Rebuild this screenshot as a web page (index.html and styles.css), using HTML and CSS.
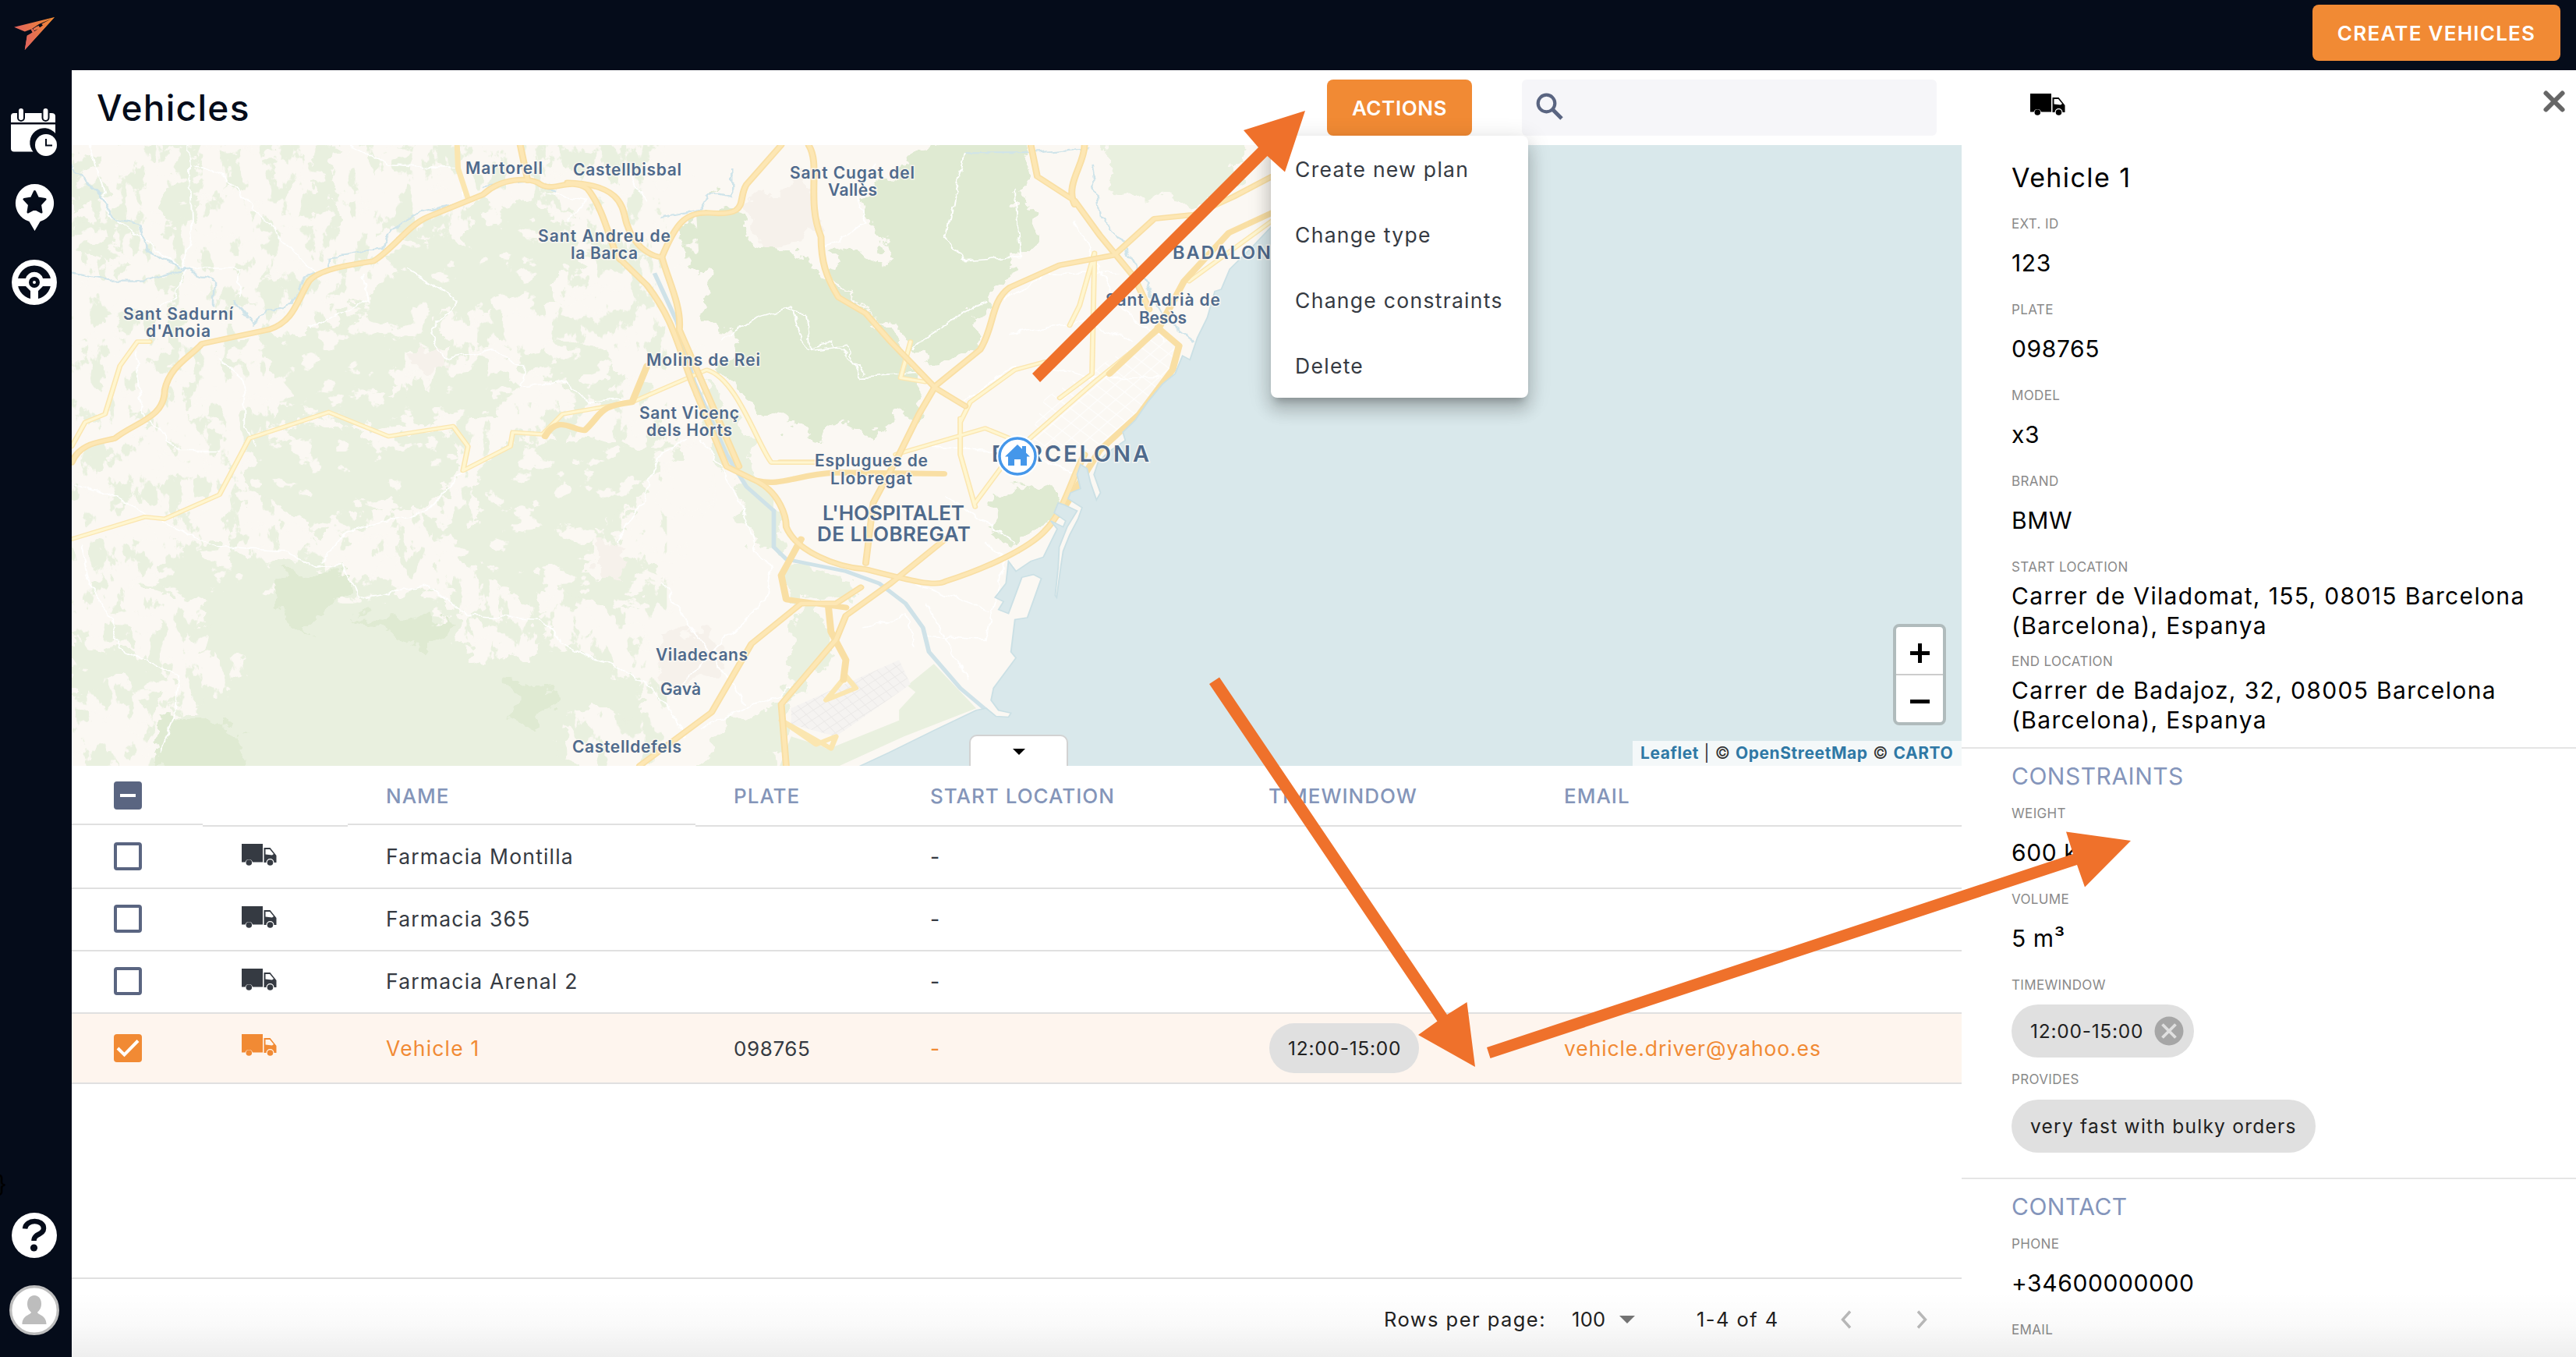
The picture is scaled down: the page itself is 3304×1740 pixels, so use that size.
FILE: index.html
```html
<!DOCTYPE html>
<html lang="en">
<head>
<meta charset="utf-8">
<title>Vehicles</title>
<link rel="stylesheet" href="styles.css">
</head>
<body>
<svg class="defs" width="0" height="0">
  <symbol id="truck" viewBox="0 0 45 28">
    <path d="M0 0H27V23.500H14A5 5 0 0 0 4.500 23.500H0Z"/>
    <path fill-rule="evenodd" d="M28.500 5H36.500L44.500 15V24H41.500A5 5 0 0 0 31.500 24H28.500ZM30.500 7V13.500L39 14.500L41 13L36 7Z"/>
    <circle cx="9.300" cy="24" r="3.800"/><circle cx="36.500" cy="24" r="3.800"/>
  </symbol>
</svg>
<div class="app">
  <header class="topbar">
    <svg class="logo" viewBox="0 0 54 44">
      <defs><linearGradient id="lg" x1="0" y1="0" x2="1" y2="0"><stop offset="0" stop-color="#e0635f"/><stop offset="1" stop-color="#f28b30"/></linearGradient></defs>
      <path fill="url(#lg)" d="M53 0L0 13L14 19L23 15.500L33 9L48 2.500L36 12L25 20L17 24L14 43Z"/>
      <path fill="url(#lg)" d="M25 15L30 12L32 15L26 18Z"/>
      <path fill="url(#lg)" d="M53 0L14 43L17 25L24 20L22 16L24 15L27 19L31 16L29 13L32 11L34 14L38 11L36 9L48 2.500Z"/>
    </svg>
    <button class="btn btn-create">CREATE VEHICLES</button>
  </header>
  <nav class="sidebar">
    <svg class="nav-cal" viewBox="0 0 60 61">
      <path fill="#fff" d="M0 10Q0 6 4 6H52Q57 6 57 10V18H0ZM0 20.500H57V32A17 17 0 0 0 28.500 55.500H4Q0 55.500 0 51.500Z"/>
      <g fill="#fff" stroke="#050c1a" stroke-width="2"><rect x="9" y="-1" width="8" height="17" rx="4"/><rect x="40.500" y="-1" width="8" height="17" rx="4"/></g>
      <circle cx="45" cy="47" r="14" fill="#fff"/><path d="M45 39V47.500H53" fill="none" stroke="#050c1a" stroke-width="2"/>
    </svg>
    <svg class="nav-pin" viewBox="0 0 49 60">
      <path fill="#fff" d="M24.500 0A24.500 24.500 0 0 1 31.500 48L24.500 60L17.500 48A24.500 24.500 0 0 1 24.500 0Z"/>
      <path fill="#050c1a" stroke="#050c1a" stroke-width="3" stroke-linejoin="round" d="M24.500 9.500L28.500 18L38 19.500L31.500 26.500L33 36L24.500 31.500L16 36L17.500 26.500L11 19.500L20.500 18Z"/>
    </svg>
    <svg class="nav-wheel" viewBox="0 0 58 58">
      <circle cx="29" cy="29" r="25.200" fill="none" stroke="#fff" stroke-width="7.500"/>
      <path fill="#fff" d="M5 24H18A11.500 11.500 0 0 1 40 24H53V34H40L34 40V53H24V40L18 34H5Z"/>
      <circle cx="29" cy="29" r="4.500" fill="#fff" stroke="#050c1a" stroke-width="5"/>
    </svg>
    <span class="brace">}</span>
    <svg class="nav-help" viewBox="0 0 58 58">
      <circle cx="29" cy="29" r="29" fill="#fff"/>
      <path d="M17 20.500C18 8 41 8 41 20C41 29 28.500 26 28.500 36" fill="none" stroke="#050c1a" stroke-width="6.500"/><circle cx="28.500" cy="45" r="4.600" fill="#050c1a"/>
    </svg>
    <svg class="nav-user" viewBox="0 0 64 64">
      <circle cx="32" cy="32" r="30.300" fill="#fff" stroke="#bdbdbd" stroke-width="3.400"/>
      <path fill="#bdbdbd" d="M32 13C38 13 41 18 41 24C41 29 38.500 32.500 36 34.500C36 38 47.500 38 47.500 50H16.500C16.500 38 28 38 28 34.500C25.500 32.500 23 29 23 24C23 18 26 13 32 13Z"/>
    </svg>
  </nav>

  <main class="main">
    <div class="page-head">
      <h1>Vehicles</h1>
      <div class="actions">
        <button class="btn btn-actions">ACTIONS</button>
        <ul class="menu">
          <li>Create new plan</li><li>Change type</li><li>Change constraints</li><li>Delete</li>
        </ul>
      </div>
      <div class="search">
        <svg viewBox="0 0 36 36"><circle cx="13.500" cy="13.500" r="10.800" fill="none" stroke="#5a6581" stroke-width="4.200"/><path d="M21.500 21.500L33 33" stroke="#5a6581" stroke-width="5"/></svg>
      </div>
    </div>

    <section class="map">
      <svg class="tiles" viewBox="3 12 3801 1541" preserveAspectRatio="none">
        <defs>
          <filter id="rag" x="-5%" y="-5%" width="110%" height="110%"><feTurbulence type="fractalNoise" baseFrequency="0.022" numOctaves="4" seed="4"/><feDisplacementMap in="SourceGraphic" scale="75" xChannelSelector="R" yChannelSelector="G"/></filter>
          <filter id="patch" color-interpolation-filters="sRGB" x="0" y="0" width="100%" height="100%"><feTurbulence type="fractalNoise" baseFrequency="0.018" numOctaves="5" seed="11" result="n"/><feColorMatrix in="n" type="matrix" values="0 0 0 0 .984  0 0 0 0 .973  0 0 0 0 .953  26 0 0 0 -15.900"/><feComposite operator="in" in2="SourceGraphic"/></filter>
          <filter id="scrub" color-interpolation-filters="sRGB" x="0" y="0" width="100%" height="100%"><feTurbulence type="fractalNoise" baseFrequency="0.026 0.012" numOctaves="5" seed="23" result="n"/><feColorMatrix in="n" type="matrix" values="0 0 0 0 .913  0 0 0 0 .941  0 0 0 0 .874  26 0 0 0 -14.300"/><feComposite operator="in" in2="SourceGraphic"/></filter>
          <filter id="wob" x="-5%" y="-5%" width="110%" height="110%"><feTurbulence type="fractalNoise" baseFrequency="0.03" numOctaves="3" seed="7"/><feDisplacementMap in="SourceGraphic" scale="22" xChannelSelector="R" yChannelSelector="G"/></filter>
          <pattern id="grid" width="26" height="26" patternUnits="userSpaceOnUse" patternTransform="rotate(-47)"><path d="M0 0H26M0 0V26" stroke="#fff" stroke-width="4" fill="none"/></pattern>
          <pattern id="apron" width="18" height="18" patternUnits="userSpaceOnUse" patternTransform="rotate(-38)"><path d="M0 0H18M0 0V18" stroke="#ebe9e7" stroke-width="3" fill="none"/></pattern>
        </defs>
        <rect x="0" y="0" width="3810" height="1560" fill="#fbf8f3"/>
        <rect filter="url(#scrub)" x="0" y="0" width="1200" height="1553"/>
        <g fill="#e9f0df" filter="url(#rag)">
          <path d="M650 235L790 245L800 170L870 150L960 175L985 230L1080 275L980 355L990 420L900 390L800 440L760 420L720 470L770 500L740 540L640 520L560 480L540 420L640 350Z"/>
          <path d="M300 520L380 480L500 470L620 430L660 530L640 640L720 620L800 560L880 580L900 640L820 700L700 690L640 730L520 680L400 720L440 640L400 560Z"/>
          <path d="M360 740L500 700L620 740L760 715L800 800L750 880L640 940L560 920L500 980L420 900L360 900Z"/>
          <path d="M800 820L880 760L960 760L1060 740L1140 760L1200 740L1240 780L1160 840L1120 920L1060 960L1040 1080L1140 1040L1200 1080L1140 1160L1030 1140L960 1100L930 1180L880 1120L820 1080L780 980L830 940Z"/>
          <path d="M140 1110L260 1000L360 1040L540 1050L580 1140L720 1110L780 1170L780 1260L860 1310L980 1240L1080 1310L1160 1380L1140 1440L1020 1400L980 1480L1020 1590L160 1590L200 1440L355 1340L355 1290L240 1260L280 1150Z"/>
          <path d="M1000 500L1080 530L1100 600L1060 640L980 610L900 560ZM200 20L250 12L250 200L190 220ZM480 20L530 20L540 200L490 180ZM0 20L60 40L80 130L0 190ZM0 1240L110 1260L200 1340L170 1420L90 1340L0 1390ZM0 220L90 260L120 330L0 280Z"/>
          <path d="M2080 -20L2367 -20L2350 110L2260 170L2200 140L2100 130Z"/>
          <path d="M1270 590L1340 700L1400 850L1440 960L1440 1040L1370 1000L1340 860L1280 740ZM1435 1060L1560 1085L1575 1130L1450 1145ZM1455 1180L1510 1160L1540 1250L1460 1380L1330 1440L1250 1590L1420 1590L1430 1450Z"/>
        </g>
        <g fill="#dfead2" filter="url(#rag)">
          <path d="M1220 220L1290 150L1350 180L1360 250L1420 240L1470 300L1530 350L1600 420L1640 470L1690 560L1720 620L1700 690L1660 680L1620 740L1560 700L1500 750L1430 690L1350 640L1310 560L1360 500L1270 440L1300 380L1240 290Z"/>
          <path d="M1660 60L1760 0L1920 0L1940 100L1900 160L1950 180L1930 250L1900 330L1850 360L1860 400L1810 440L1840 500L1780 540L1730 550L1690 500L1620 440L1560 370L1520 280L1560 260L1650 320L1620 220L1600 150Z"/>
          <path d="M1860 870L1940 860L1985 880L1970 950L1900 1005L1850 960Z"/>
        </g>
        <path filter="url(#patch)" d="M0 0H1250L1280 600L1300 900L1180 1270L780 1270L700 1150L300 1150L200 1553H0Z"/>
        <path fill="#dfead2" filter="url(#rag)" d="M415 1080L540 1060L570 1110L500 1170L480 1230L430 1180ZM560 1180L700 1190L760 1170L750 1240L710 1260L640 1210ZM890 1330L980 1370L940 1460L890 1440ZM170 1440L280 1420L360 1490L330 1590L180 1590Z"/>
        <g fill="#f6f1eb" filter="url(#rag)"><path d="M1350 150L1430 130L1480 250L1400 260ZM1060 1000L1130 1010L1110 1090L1060 1070ZM1180 1230L1300 1220L1310 1330L1200 1350ZM1427 100L1490 90L1500 220L1427 240ZM700 500L760 540L720 590L680 560Z"/></g>
        <path fill="#e9f0df" d="M1737 1300L1822 1410L1677 1480L1547 1553H1427L1450 1480L1527 1510L1667 1440L1667 1370Z"/>
        <path fill="#fbf8f3" d="M1450 1420L1660 1330L1700 1370L1640 1450L1520 1510L1440 1450Z"/>
        <path fill="#f5f3f1" d="M1450 1410L1667 1290L1690 1350L1540 1480L1450 1450Z"/><path fill="url(#apron)" d="M1450 1410L1667 1290L1690 1350L1540 1480L1450 1450Z"/>
        <path fill="url(#grid)" opacity=".8" d="M1960 640L2180 480L2230 500L2220 570L2150 680L2070 770L1990 780L1930 740Z"/>
        <g filter="url(#wob)" fill="none" stroke="#fff">
          <g stroke-width="3">
            <path d="M40 12L80 190L150 250L230 320L210 390L180 420M240 12L245 230L225 320M250 60L310 90L370 170L440 260L490 330M230 320L340 320L340 390M560 12L640 60L780 70L790 140"/>
            <path d="M3 850L100 890L190 950L300 1010L430 1020L490 1060L550 1050L580 1140L720 1105L800 1180L950 1190L990 1250L1150 1340L1200 1400L1240 1480"/>
            <path d="M20 1000L40 1110L80 1180L100 1260L220 1330L210 1430L180 1520M590 330L600 400L520 440L480 470M680 320L780 400L720 480L760 540L850 520L910 560L910 610L1000 600L1040 650L1110 640"/>
            <path d="M300 540L350 600L350 700L370 760M130 520L140 640L150 690L220 770L300 770M790 820L720 920L560 970L500 1050M1270 740L1350 900L1380 1020L1410 1060L1400 1140L1300 1260L1210 1380M1240 740L1180 790L1150 900L1100 1000M1190 1100L1260 1230L1360 1400M1270 1460L1470 1350M1000 200L1040 150L950 130M1110 60L1160 150"/>
            <path d="M1310 500L1380 440L1450 415L1480 520L1530 500L1600 580M1430 420L1480 430L1490 520L1560 510L1590 590L1700 580M1800 30L1760 240L1800 300L1910 290L1900 120M1840 400L1740 470L1690 520M1510 270L1600 210L1580 130L1620 60"/>
            <path d="M1880 1040L1840 1240L1720 1230M1700 1100L1850 1170M1720 1150L1810 1340M1600 1210L1680 1180L1700 1260M1760 880L1900 1000M1660 900L1750 1000M2020 200L2100 400L2200 500M1880 400L1960 330L2110 330M1890 480L2040 450L2140 500M1950 560L2060 590L2190 590M1700 760L1900 770L2030 830M1900 560L1800 650M1840 1000L1900 1060"/>
          </g>
        </g>
        <g fill="none" stroke="#cfe4ea" filter="url(#wob)">
          <path stroke-width="4" d="M3 60L30 100L60 130L90 200L140 210L150 270L200 300L230 320L150 350L80 350L3 330M230 320L290 350L290 410M330 400L370 460L400 420L450 410L470 340L520 320L520 290L630 270L640 230L700 180L800 150M830 115L930 100L980 130M1190 190L1270 170L1290 130L1330 140L1330 70M1800 30L1950 30L2050 20M2055 60L2070 190L2120 260L2200 440L2260 500"/>
        </g>
        <path fill="none" stroke="#cfe2e8" stroke-width="9" d="M1175 330L1220 450L1255 600L1320 780L1360 860L1415 920L1415 1010L1440 1040L1560 1070L1627 1100L1680 1150L1715 1210L1727 1270L1790 1360L1857 1430"/>
        <g fill="none" stroke-linejoin="round" stroke-linecap="round">
          <g stroke="#fbe6b0" stroke-width="11">
            <path d="M1427 798H1500M3 990L150 935L190 940L300 880L360 740L520 675L640 735L770 710L800 760L790 820L885 760L890 725L950 730L990 680L1130 650L1280 570C1340 590 1380 750 1410 800H1500M3 760L30 700L70 680L100 560L135 500L160 500"/>
            <path d="M2060 280L2030 410L2010 460M2060 280L2055 580L1990 640M1660 780L1840 715L1890 740M1790 690L1790 780L1820 910M1930 740L2060 600L2190 470M1880 800L1820 900M1690 500L1670 590L1720 600M1960 550L1900 570L1810 650L1790 700M2250 350L2417 200M1520 1390L1560 1330L1580 1360ZM1430 1440L1500 1500L1540 1480L1530 1510Z"/>
            <path d="M778 12L780 70L800 145"/>
          </g>
          <g stroke="#fff6d0" stroke-width="6">
            <path d="M3 990L150 935L190 940L300 880L360 740L520 675L640 735L770 710L800 760L790 820L885 760L890 725L950 730L990 680L1130 650L1280 570C1340 590 1380 750 1410 800H1500M3 760L30 700L70 680L100 560L135 500L160 500"/>
            <path d="M2060 280L2030 410L2010 460M2060 280L2055 580L1990 640M1660 780L1840 715L1890 740M1790 690L1790 780L1820 910M1930 740L2060 600L2190 470M1880 800L1820 900M1690 500L1670 590L1720 600M1960 550L1900 570L1810 650L1790 700M2250 350L2417 200"/>
          </g>
          <g stroke="#f9dfa4" stroke-width="14">
            <path d="M3 800C20 750 60 750 90 740C130 700 190 690 190 620C200 560 240 540 265 505L400 470C450 450 455 400 480 350C500 320 560 310 610 300C650 270 680 210 720 190L830 135C870 90 920 95 940 105C970 135 1000 90 1040 120C1080 180 1090 290 1110 300L1160 360C1210 440 1220 500 1250 600L1320 810L1370 840C1430 870 1440 940 1440 960C1460 1020 1540 1060 1600 1065C1680 1090 1740 1110 1760 1095C1850 1060 1930 1010 1960 970C2000 920 2010 850 2040 780"/>
            <path d="M905 12L920 100M1000 105C1120 110 1110 180 1120 210C1140 280 1180 290 1190 290C1220 200 1240 180 1280 180C1370 190 1340 150 1360 110L1430 12M1190 290C1200 340 1230 410 1225 470L1345 810M1485 12C1510 60 1480 150 1510 240C1510 300 1520 340 1545 390L1600 430L1650 500L1740 615L1800 660M1380 845C1430 860 1460 830 1540 825L1757 828"/>
            <path d="M1600 1050L1615 900L1667 780L1707 680L1740 610L1830 520C1860 460 1850 400 1890 365L1990 310L2100 285L2180 195L2260 185L2340 140L2417 90M1932 12L1945 90L2020 150L2070 235L2100 280L2140 340L2170 420M2040 12C2040 60 2000 110 2020 160"/>
            <path d="M2417 180L2330 230L2240 350L2190 465L2090 580M2187 465L2230 510L2217 570L2150 680L2070 770L2030 850L1990 930"/>
            <path d="M1145 1553L1290 1420L1370 1250L1470 1150L1540 1150L1590 1110M1440 1553L1430 1400L1540 1240L1560 1180L1650 1100L1760 990M1470 990L1430 1080L1440 1140L1560 1160M1525 1160L1530 1220L1560 1290L1555 1340M1160 560L1130 650C1060 660 1070 680 1035 720C1010 720 980 680 955 735"/>
          </g>
          <g stroke="#fde7b4" stroke-width="8">
            <path d="M3 800C20 750 60 750 90 740C130 700 190 690 190 620C200 560 240 540 265 505L400 470C450 450 455 400 480 350C500 320 560 310 610 300C650 270 680 210 720 190L830 135C870 90 920 95 940 105C970 135 1000 90 1040 120C1080 180 1090 290 1110 300L1160 360C1210 440 1220 500 1250 600L1320 810L1370 840C1430 870 1440 940 1440 960C1460 1020 1540 1060 1600 1065C1680 1090 1740 1110 1760 1095C1850 1060 1930 1010 1960 970C2000 920 2010 850 2040 780"/>
            <path d="M905 12L920 100M1000 105C1120 110 1110 180 1120 210C1140 280 1180 290 1190 290C1220 200 1240 180 1280 180C1370 190 1340 150 1360 110L1430 12M1190 290C1200 340 1230 410 1225 470L1345 810M1485 12C1510 60 1480 150 1510 240C1510 300 1520 340 1545 390L1600 430L1650 500L1740 615L1800 660"/>
            <path d="M1600 1050L1615 900L1667 780L1707 680L1740 610L1830 520C1860 460 1850 400 1890 365L1990 310L2100 285L2180 195L2260 185L2340 140L2417 90M1932 12L1945 90L2020 150L2070 235L2100 280L2140 340L2170 420M2040 12C2040 60 2000 110 2020 160"/>
            <path d="M1145 1553L1290 1420L1370 1250L1470 1150L1540 1150L1590 1110M1440 1553L1430 1400L1540 1240L1560 1180L1650 1100L1760 990"/>
          </g>
        </g>
        <g transform="translate(1427 0)">
          <path fill="#d9e8eb" stroke="#cbe0e5" stroke-width="3" d="M1000 200L950 265L905 320L888 370L875 375L860 440L840 490L825 545L810 535L795 580L770 605L740 650L715 695L690 725L695 745L660 775L640 800L632 830L645 875L637 893L625 850L618 815L605 805L598 830L605 865L585 875L580 890L608 912L600 940L583 980L570 1020L565 1060L557 1135L554 1130L560 1060L562 1010L578 960L598 920L572 905L560 900L552 925L575 945L570 960L545 945L558 965L530 1035L505 1045L475 1070L460 1045L455 1100L433 1135L450 1145L440 1165L460 1175L487 1085L510 1078L526 1088L498 1185L473 1190L465 1270L475 1285L430 1360L425 1390L440 1415L465 1422L460 1432L435 1430L415 1410L395 1415L310 1465L220 1520L150 1560H2390V0H1000Z"/>
        </g>
      </svg>
      <svg class="labels" viewBox="92 186 2424 796">
        <g class="town">
          <text x="597" y="223" textLength="99">Martorell</text><text x="735" y="225" textLength="139">Castellbisbal</text>
          <text x="690" y="310" textLength="170">Sant Andreu de</text><text x="732" y="332" textLength="86">la Barca</text>
          <text x="158" y="410" textLength="141">Sant Sadurní</text><text x="187" y="432" textLength="83">d'Anoia</text>
          <text x="829" y="469" textLength="146">Molins de Rei</text>
          <text x="820" y="537" textLength="128">Sant Vicenç</text><text x="829" y="559" textLength="110">dels Horts</text>
          <text x="841" y="847" textLength="118">Viladecans</text><text x="847" y="891" textLength="52">Gavà</text><text x="734" y="965" textLength="140">Castelldefels</text>
          <text x="1013" y="229" textLength="160">Sant Cugat del</text><text x="1062" y="251" textLength="63">Vallès</text>
          <text x="1418" y="392" textLength="147">Sant Adrià de</text><text x="1461" y="415" textLength="61">Besòs</text>
          <text x="1045" y="598" textLength="145">Esplugues de</text><text x="1065" y="621" textLength="105">Llobregat</text>
        </g>
        <g class="city">
          <text x="1504" y="332" textLength="145" font-size="23.500">BADALONA</text>
          <text x="1272" y="592" textLength="202" font-size="29">BARCELONA</text>
          <text x="1055" y="667" textLength="182" font-size="26">L'HOSPITALET</text>
          <text x="1048" y="694" textLength="197" font-size="26">DE LLOBREGAT</text>
        </g>
        <g transform="translate(1305 585)">
          <circle r="27" fill="#fff"/><circle r="23" fill="#fff" stroke="#4597ea" stroke-width="3.500"/>
          <path fill="#4597ea" d="M0 -15L16 0.500H12V12H4V4H-4V12H-12V0.500H-16ZM6 -13H11V-4H6Z"/>
        </g>
      </svg>
      <div class="map-toggle"><i></i></div>
      <div class="zoom"><b class="plus"></b><b></b></div>
      <div class="credit"><a>Leaflet</a> | © <a>OpenStreetMap</a> © <a>CARTO</a></div>
    </section>

    <section class="table">
      <div class="row head">
        <div class="c up"><i class="cb some"></i></div><div class="c"></div><div class="c up">NAME</div><div class="c">PLATE</div><div class="c">START LOCATION</div><div class="c">TIMEWINDOW</div><div class="c">EMAIL</div>
      </div>
      <div class="row"><div class="c"><i class="cb"></i></div><div class="c"><svg class="trk"><use href="#truck"/></svg></div><div class="c">Farmacia Montilla</div><div class="c"></div><div class="c">-</div><div class="c"></div><div class="c"></div></div>
      <div class="row"><div class="c"><i class="cb"></i></div><div class="c"><svg class="trk"><use href="#truck"/></svg></div><div class="c">Farmacia 365</div><div class="c"></div><div class="c">-</div><div class="c"></div><div class="c"></div></div>
      <div class="row"><div class="c"><i class="cb"></i></div><div class="c"><svg class="trk"><use href="#truck"/></svg></div><div class="c">Farmacia Arenal 2</div><div class="c"></div><div class="c">-</div><div class="c"></div><div class="c"></div></div>
      <div class="row sel"><div class="c"><svg class="cb on" viewBox="0 0 36 36"><path d="M5 18L13.500 26.500L31 8.500" fill="none" stroke="#fff" stroke-width="4"/></svg></div><div class="c"><svg class="trk"><use href="#truck"/></svg></div><div class="c">Vehicle 1</div><div class="c dark num">098765</div><div class="c">-</div><div class="c"><div class="chip small">12:00-15:00</div></div><div class="c mail">vehicle.driver@yahoo.es</div></div>
    </section>

    <footer class="pager">
      <span class="rpp">Rows per page:</span><span class="per">100</span><i class="caret"></i><span class="range">1-4 of 4</span>
      <svg class="chev" viewBox="0 0 14 24"><path d="M12 1.500L2.500 12L12 22.500" fill="none" stroke="#bababa" stroke-width="3.400"/></svg>
      <svg class="chev next" viewBox="0 0 14 24"><path d="M2 1.500L11.500 12L2 22.500" fill="none" stroke="#bababa" stroke-width="3.400"/></svg>
    </footer>
  </main>

  <aside class="panel">
    <div class="panel-bar">
      <svg class="trk"><use href="#truck"/></svg>
      <svg class="x" viewBox="0 0 28 28"><path d="M3.500 3.500L24.500 24.500M24.500 3.500L3.500 24.500" stroke="#666" stroke-width="6" stroke-linecap="round"/></svg>
    </div>
    <h2>Vehicle 1</h2>
    <div class="group">
      <label>EXT. ID</label><p>123</p>
      <label>PLATE</label><p>098765</p>
      <label>MODEL</label><p>x3</p>
      <label>BRAND</label><p>BMW</p>
      <label>START LOCATION</label><p class="addr">Carrer de Viladomat, 155, 08015 Barcelona<br>(Barcelona), Espanya</p>
      <label>END LOCATION</label><p class="addr">Carrer de Badajoz, 32, 08005 Barcelona<br>(Barcelona), Espanya</p>
    </div>
    <div class="group constraints">
      <h3>CONSTRAINTS</h3>
      <label>WEIGHT</label><p>600 kg</p>
      <label>VOLUME</label><p>5 m³</p>
      <label>TIMEWINDOW</label>
      <div class="chip">12:00-15:00<svg viewBox="0 0 38 38"><circle cx="19" cy="19" r="18.500" fill="#a6a6a6"/><path d="M10.500 10.500L27.500 27.500M27.500 10.500L10.500 27.500" stroke="#e0e0e0" stroke-width="3.800"/></svg></div>
      <label>PROVIDES</label>
      <div class="chip wide">very fast with bulky orders</div>
    </div>
    <div class="group last">
      <h3>CONTACT</h3>
      <label>PHONE</label><p>+34600000000</p>
      <label>EMAIL</label>
    </div>
  </aside>
</div>
<div class="fade"></div>
<svg class="arrows" viewBox="0 0 3304 1740" fill="#ef712b">
  <path d="M1324 479L1614 189L1595 167L1674 142L1648 220.500L1625.500 200L1334 490Z"/>
  <path d="M1551 877L1564 868.500L1856 1301L1881.500 1285L1892 1368L1819 1327L1843.500 1309.500Z"/>
  <path d="M1907 1343L2659 1095L2650 1066.500L2733 1078L2674 1137.500L2664 1109L1911.500 1357Z"/>
</svg>
</body>
</html>
```
FILE: styles.css
```css
* { box-sizing: border-box; margin: 0; padding: 0; }
body { width: 3304px; height: 1740px; overflow: hidden; background: #fff; font-family: Inter, "Liberation Sans", sans-serif; color: #353a42; position: relative; }
svg { display: block; overflow: visible; }
.defs { position: absolute; }
.app { display: grid; grid-template: 90px 1650px / 92px 2424px 788px; }

.topbar { grid-column: 1 / 4; background: #050c1a; display: flex; justify-content: space-between; padding: 6px 20px 12px 18px; }
.logo { width: 53px; height: 43px; margin-top: 16px; }
.btn { border: 0; border-radius: 8px; background: #f18a34; color: #fff; font-family: inherit; font-weight: 600; font-size: 26px; height: 72px; white-space: nowrap; letter-spacing: .6px; }
.btn-create { width: 318px; letter-spacing: 1.250px; }

.sidebar { background: #050c1a; display: flex; flex-direction: column; padding-top: 49px; overflow: hidden; }
.nav-cal { width: 60px; height: 61px; margin-left: 14px; }
.nav-pin { width: 49px; height: 60px; margin: 36px 0 0 20px; }
.nav-wheel { width: 58px; height: 58px; margin: 37px 0 0 15px; }
.brace { margin-top: 1106px; height: 42px; margin-left: -4px; color: #000; font-size: 30px; line-height: 42px; }
.nav-help { width: 58px; height: 58px; margin: 16px 0 0 15px; }
.nav-user { width: 64px; height: 64px; margin: 35px 0 0 12px; }

.main { display: flex; flex-direction: column; height: 1650px; }
.page-head { height: 96px; flex: none; display: flex; align-items: center; padding-left: 32px; }
h1 { width: 1578px; font-size: 46px; font-weight: 500; color: #050c1a; letter-spacing: 1.300px; }
.actions { position: relative; width: 250px; }
.btn-actions { width: 186px; }
.menu { position: absolute; z-index: 5; left: -72px; top: 72px; width: 330px; height: 336px; background: #fff; border-radius: 8px; list-style: none; box-shadow: 0 10px 10px -6px rgba(0,0,0,.2), 0 16px 20px 2px rgba(0,0,0,.14), 0 6px 28px 4px rgba(0,0,0,.12); font-size: 26.500px; letter-spacing: 1.300px; }
.menu li { height: 84px; padding-left: 31px; line-height: 86px; white-space: nowrap; }
.search { width: 532px; height: 72px; border-radius: 6px; background: #f6f6f9; padding: 17px 18px; }
.search svg { width: 36px; height: 36px; }

.map { height: 796px; flex: none; position: relative; overflow: hidden; background: #d9e8eb; }
.tiles, .labels { position: absolute; left: 0; top: 0; width: 2424px; height: 796px; }
.labels text { font-weight: 600; fill: #4f6a8c; stroke: #fbf8f3; stroke-width: 3px; stroke-opacity: .8; paint-order: stroke; }
.town text { font-size: 21px; }
.map-toggle { position: absolute; left: 1151px; top: 756px; width: 127px; height: 42px; background: #fff; border: 2px solid #d2d2d2; border-radius: 10px 10px 0 0; }
.map-toggle i { display: block; margin: 16px auto 0; width: 16px; border: 8px solid transparent; border-top-color: #000; border-bottom: 0; }
.zoom { position: absolute; left: 2336px; top: 614px; width: 68px; height: 130px; background: #fff; border: 4px solid #b0bbbc; border-radius: 8px; }
.zoom b { display: block; height: 60px; position: relative; }
.zoom b:first-child { height: 62px; border-bottom: 2px solid #ccc; }
.zoom b::before, .zoom .plus::after { content: ""; position: absolute; left: 18px; top: 31px; width: 25px; height: 4.500px; background: #000; }
.zoom .plus::after { left: 28px; top: 21px; width: 4.500px; height: 25px; }
.credit { position: absolute; right: 0; bottom: 0; width: 422px; height: 32px; padding-left: 10px; line-height: 31px; font-size: 21px; letter-spacing: .580px; white-space: nowrap; background: rgba(255,255,255,.7); color: #333; }
.credit a { color: #2f78a5; font-weight: 700; }

.table { flex: 1; font-size: 26.500px; white-space: nowrap; letter-spacing: 1.200px; }
.row { display: grid; grid-template-columns: 168px 186px 446px 252px 434px 379px 559px; height: 80px; }
.c { display: flex; align-items: center; padding: 0 0 2px 49px; border-bottom: 2px solid #e0e0e0; }
.c:first-child { padding-left: 54px; }
.head { height: 78px; color: #8495b9; font-size: 26px; font-weight: 500; letter-spacing: 1px; }
.head .c { height: 78px; padding-bottom: 0; }
.head .up { height: 76px; padding-top: 2px; }
.cb { display: block; width: 36px; height: 36px; border: 4px solid #5a6581; border-radius: 4px; }
.cb.some { background: linear-gradient(#fff, #fff) center / 20px 4px no-repeat #5a6581; }
.cb.on { border: 0; background: #f18a34; }
.trk { width: 45px; height: 28px; fill: currentColor; margin: -4px 0 0 1px; }
.sel { height: 90px; background: #fef5ee; color: #f18a34; }
.sel .c { padding-bottom: 0; }
.sel .trk { margin-top: -8px; }
.sel .dark { color: #353a42; font-size: 26px; letter-spacing: .600px; }
.sel .mail { letter-spacing: .900px; }
.chip { height: 68px; border-radius: 34px; background: #e0e0e0; color: #212121; display: flex; align-items: center; font-size: 24.500px; letter-spacing: .750px; padding-left: 24px; width: 234px; white-space: nowrap; }
.chip.small { width: 192px; height: 64px; border-radius: 32px; margin-left: 1px; }

.pager { height: 102px; flex: none; border-top: 2px solid #e0e0e0; display: flex; align-items: center; padding: 3px 0 0 1683px; font-size: 25.500px; color: #212121; white-space: nowrap; letter-spacing: 1.450px; }
.rpp { width: 241px; } .per { width: 61px; letter-spacing: .300px; }
.caret { width: 20px; border: 10px solid transparent; border-top-color: #757575; border-bottom: 0; }
.range { margin-left: 79px; width: 185px; }
.chev { width: 14px; height: 24px; }
.chev.next { margin-left: 83px; }

.panel { color: #000; height: 1650px; overflow: hidden; }
.panel-bar { height: 96px; display: flex; justify-content: space-between; padding: 26px 14px 0 87px; }
.panel-bar .trk { margin-top: 4px; }
.x { width: 28px; height: 28px; }
h2 { font-size: 34px; font-weight: 400; letter-spacing: 1.400px; padding-left: 64px; height: 89px; line-height: 84px; }
.group { border-bottom: 2px solid #e5e5e5; padding: 0 0 16px 64px; }
.constraints { padding-bottom: 32px; }
.group.last { border: 0; }
label { display: block; height: 24px; line-height: 24px; font-size: 17px; letter-spacing: .350px; color: #8a8a8a; }
p { font-size: 30px; letter-spacing: .600px; line-height: 76px; height: 76px; margin-bottom: 10px; white-space: nowrap; }
p.addr { line-height: 38px; letter-spacing: 1.350px; margin: 6px 0 15px; }
p.addr:last-child { margin-bottom: 0; }
h3 { font-size: 30px; font-weight: 400; letter-spacing: .500px; line-height: 71px; height: 71px; color: #8495bb; }
.panel .chip { margin: 13px 0 16px; }
.panel .chip svg { width: 38px; height: 38px; margin-left: 14px; }
.panel .wide { width: 390px; margin: 14px 0 0; letter-spacing: 1.250px; }

.fade { position: absolute; left: 92px; right: 0; bottom: 0; height: 84px; background: linear-gradient(rgba(0,0,0,0), rgba(0,0,0,.018) 50%, rgba(0,0,0,.065)); }
.arrows { position: absolute; left: 0; top: 0; width: 3304px; height: 1740px; z-index: 10; }
```
